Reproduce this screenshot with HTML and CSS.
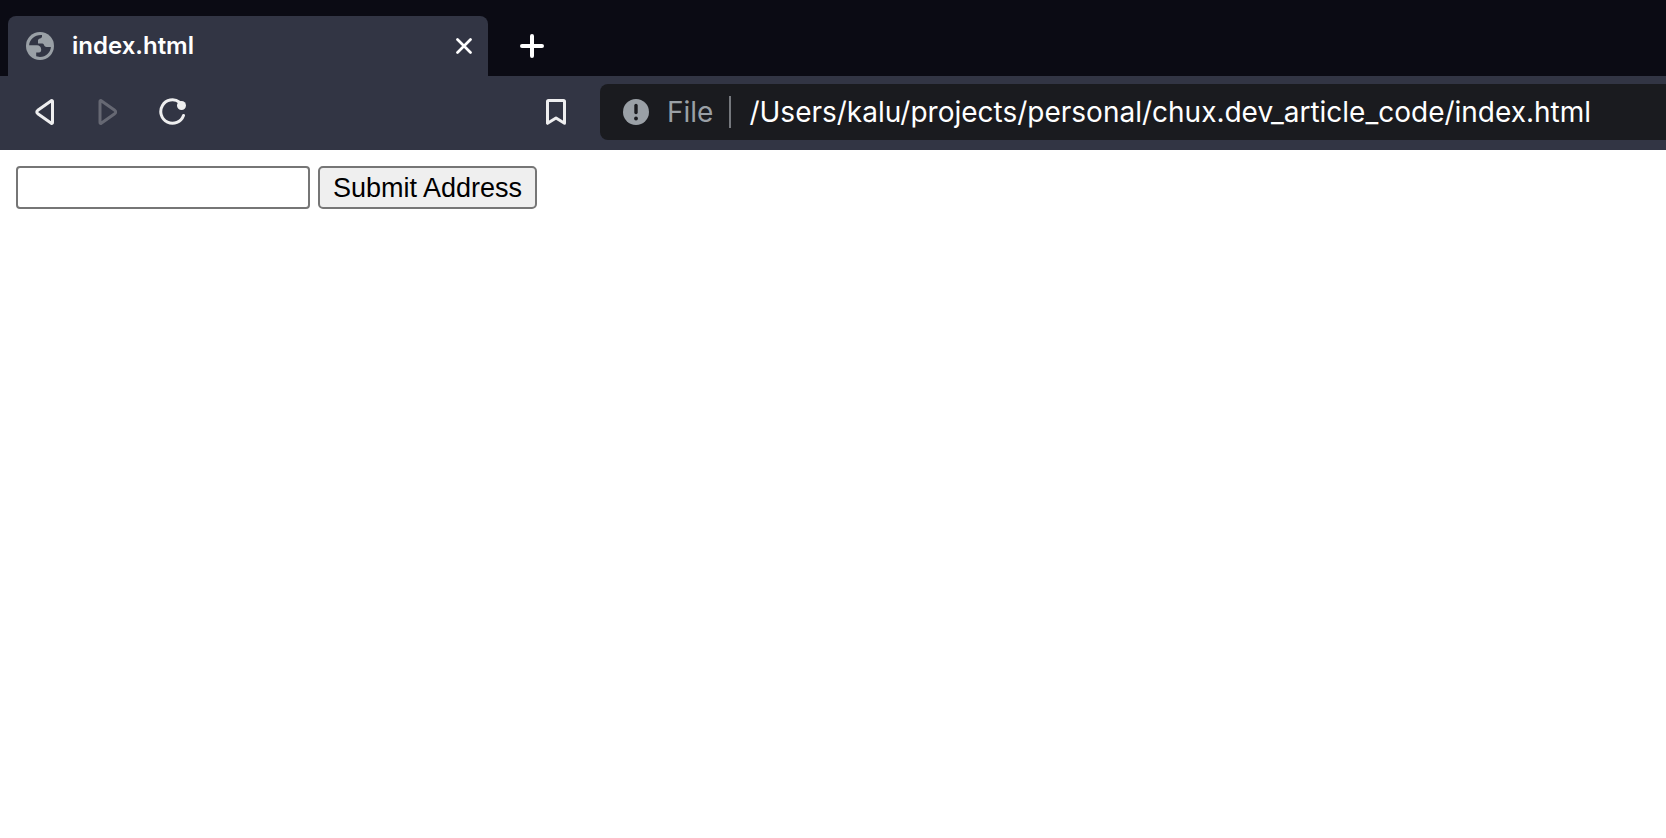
FILE: index.html
```html
<!DOCTYPE html>
<html lang="en">
<head>
<meta charset="utf-8">
<title>index.html</title>
<link rel="stylesheet" href="styles.css">
</head>
<body>
<header class="browser">
  <div class="tab-strip">
    <div class="tab">
      <svg class="icon" width="28" height="28" viewBox="0 0 28 28" aria-hidden="true">
        <circle cx="14" cy="14" r="14" fill="#9aa0a6"/>
        <path d="M3.100 13.200C3.700 7 9 2.500 16 3V4.500C16 7 12 6 12 8.500V11.500H16.500C18 11.500 18 15 20.500 15H24.900C24.500 20.500 20 25 14 25L10.200 24.300V20.500H13C14.500 20.500 15.200 19.500 15.200 17.500C15.200 15 13.500 13.200 11 13.200Z" fill="#323544"/>
      </svg>
      <span class="tab-title">index.html</span>
      <button class="icon-button" type="button" aria-label="Close tab">
        <svg class="icon" width="16" height="16" viewBox="0 0 16 16"><path d="M1.500 1.500 14.500 14.500M14.500 1.500 1.500 14.500" fill="none" stroke="#fff" stroke-width="2.700" stroke-linecap="round"/></svg>
      </button>
    </div>
    <button class="icon-button" type="button" aria-label="New tab">
      <svg class="icon" width="24" height="24" viewBox="0 0 24 24"><path d="M12 2V22M2 12H22" fill="none" stroke="#fff" stroke-width="4" stroke-linecap="round"/></svg>
    </button>
  </div>
  <div class="toolbar">
    <nav class="navigation" aria-label="History">
      <button class="icon-button" type="button" aria-label="Back">
        <svg class="icon" width="20" height="28" viewBox="0 0 20 28"><path d="M16.300 2.700 2.800 12.300Q.800 14 2.800 15.700L16.300 25.300Q17.500 25.800 17.500 24.500V3.500Q17.500 2.200 16.300 2.700Z" fill="none" stroke="#eeeeef" stroke-width="3" stroke-linejoin="round"/></svg>
      </button>
      <button class="icon-button" type="button" aria-label="Forward" disabled>
        <svg class="icon" width="20" height="28" viewBox="0 0 20 28"><path d="M4.700 2.700 18.200 12.300Q20.200 14 18.200 15.700L4.700 25.300Q3.500 25.800 3.500 24.500V3.500Q3.500 2.200 4.700 2.700Z" fill="none" stroke="#666873" stroke-width="3" stroke-linejoin="round" transform="translate(-.500)"/></svg>
      </button>
      <button class="icon-button" type="button" aria-label="Reload">
        <svg class="icon" width="28" height="28" viewBox="0 0 28 28"><path d="M20.500 4.200A11.700 11.700 0 1 0 24.500 17.500" fill="none" stroke="#eeeeef" stroke-width="3" stroke-linecap="round"/><circle cx="22.500" cy="7.500" r="4.500" fill="#eeeeef"/></svg>
      </button>
    </nav>
    <button class="icon-button" type="button" aria-label="Bookmark this page">
      <svg class="icon" width="20" height="28" viewBox="0 0 20 28"><path d="M1.500 3.500Q1.500 2.500 2.500 2.500H17.500Q18.500 2.500 18.500 3.500V25.300L10 20 1.500 25.300Z" fill="none" stroke="#eeeeef" stroke-width="3" stroke-linejoin="round"/></svg>
    </button>
    <div class="address">
      <svg class="icon" width="26" height="26" viewBox="0 0 26 26" aria-hidden="true"><circle cx="13" cy="13" r="13" fill="#9aa0a6"/><path d="M13 6.500V13.500" stroke="#1a1b1f" stroke-width="3.400" stroke-linecap="round"/><circle cx="13" cy="19.500" r="1.900" fill="#1a1b1f"/></svg>
      <label class="scheme" for="location">File</label>
      <input class="location" id="location" type="text" spellcheck="false" value="/Users/kalu/projects/personal/chux.dev_article_code/index.html">
    </div>
  </div>
</header>
<main class="page">
  <form class="address-form">
    <input class="address-input" type="text" aria-label="Address">
    <button class="submit" type="button">Submit Address</button>
  </form>
</main>
</body>
</html>
```
FILE: styles.css
```css
* {
  box-sizing: border-box;
}

body {
  margin: 0;
  background: #fff;
  font-family: Inter, "Liberation Sans", sans-serif;
}

.icon {
  display: block;
  flex: none;
}

.icon-button {
  flex: none;
  padding: 0;
  border: 0;
  background: none;
}

.tab-strip {
  display: flex;
  align-items: center;
  gap: 32px;
  padding: 16px 8px 0;
  background: #0b0b14;
}

.tab {
  display: flex;
  align-items: center;
  width: 480px;
  height: 60px;
  padding: 0 16px 0 18px;
  border-radius: 8px 8px 0 0;
  background: #323544;
}

.tab-title {
  flex: 1;
  padding-left: 18px;
  color: #fff;
  font-size: 24px;
  font-weight: 600;
  line-height: 32px;
}

.toolbar {
  display: flex;
  align-items: center;
  padding: 8px 0 10px 35px;
  background: #323544;
}

.navigation {
  display: flex;
  flex: none;
  gap: 42px;
  width: 511px;
}

.address {
  display: flex;
  flex: 1;
  align-items: center;
  height: 56px;
  margin-left: 34px;
  padding-left: 23px;
  border-radius: 8px 0 0 8px;
  background: #1a1b1f;
}

.scheme {
  padding: 0 16px 0 18px;
  border-right: 2px solid #75787d;
  color: #9aa0a6;
  font-size: 28px;
  line-height: 32px;
}

.location {
  flex: 1;
  min-width: 0;
  padding: 0 0 0 18px;
  border: 0;
  outline: 0;
  background: none;
  color: #fff;
  font-family: inherit;
  font-size: 28px;
  line-height: 32px;
}

.page {
  padding: 16px;
}

.address-form {
  display: flex;
  align-items: center;
  gap: 8px;
}

.address-input {
  width: 294px;
  height: 43px;
  border: 2px solid #767676;
  border-radius: 4px;
  background: #fff;
  font-family: "Liberation Sans", sans-serif;
  font-size: 27px;
}

.submit {
  height: 43px;
  padding: 0 13px;
  border: 2px solid #767676;
  border-radius: 5px;
  background: #efefef;
  color: #000;
  font-family: "Liberation Sans", sans-serif;
  font-size: 27px;
  line-height: 32px;
}
```
